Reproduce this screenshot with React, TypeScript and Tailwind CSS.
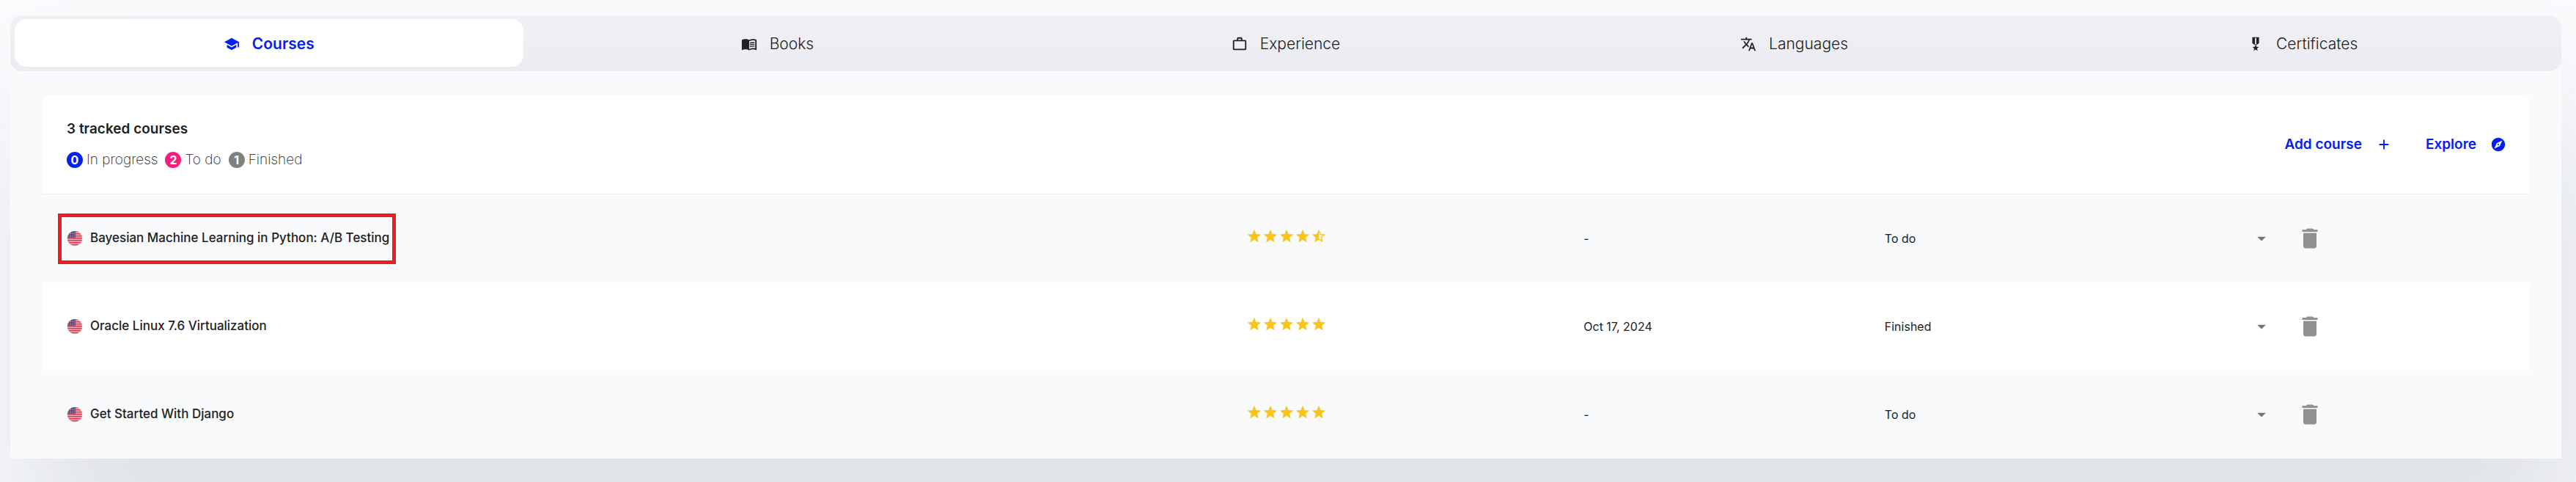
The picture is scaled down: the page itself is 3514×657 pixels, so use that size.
import { useId, useState } from "react";
import type { IconType } from "react-icons";
import {
  MdSchool,
  MdMenuBook,
  MdWorkOutline,
  MdTranslate,
  MdAdd,
  MdExplore,
  MdArrowDropDown,
  MdDelete,
  MdStar,
  MdStarHalf,
} from "react-icons/md";
import { clsx } from "clsx";

function MedalIcon({ className }: { className?: string }) {
  return (
    <svg viewBox="0 0 24 24" fill="currentColor" className={className} aria-hidden="true">
      <path d="M17 10.43V2H7v8.43c0 .35.18.68.49.86l4.18 2.51-.99 2.34-3.41.29 2.59 2.24L9.07 22 12 20.23 14.93 22l-.78-3.33 2.59-2.24-3.41-.29-.99-2.34 4.18-2.51c.3-.18.48-.5.48-.86zM13 12.23l-1 .6-1-.6V3h2v9.23z" />
    </svg>
  );
}

function FlagIcon() {
  const clip = useId();
  return (
    <svg viewBox="0 0 22 22" className="size-[22px] shrink-0" role="img" aria-label="English">
      <clipPath id={clip}>
        <circle cx="11" cy="11" r="10" />
      </clipPath>
      <circle cx="11" cy="11" r="10.5" fill="#d6d6da" />
      <g clipPath={`url(#${clip})`}>
        <rect width="22" height="22" fill="#efa3ad" />
        {[1, 4, 7, 10, 13, 16, 19].map((y) => (
          <rect key={y} y={y} width="22" height="1.4" fill="#dc3c55" />
        ))}
        <rect width="12" height="10.5" fill="#6a4a7c" />
        {[2, 4.5, 7, 9.2].map((y) =>
          [3, 5.5, 8, 10.4].map((x) => (
            <circle key={`${x}-${y}`} cx={x} cy={y} r="0.5" fill="#cfc3da" />
          )),
        )}
      </g>
    </svg>
  );
}

const tabs: { label: string; icon: IconType | typeof MedalIcon }[] = [
  { label: "Courses", icon: MdSchool },
  { label: "Books", icon: MdMenuBook },
  { label: "Experience", icon: MdWorkOutline },
  { label: "Languages", icon: MdTranslate },
  { label: "Certificates", icon: MedalIcon },
];

const counts = [
  { value: 0, label: "In progress", color: "bg-[#0220f0]" },
  { value: 2, label: "To do", color: "bg-[#fc1c80]" },
  { value: 1, label: "Finished", color: "bg-[#808080]" },
];

const courses = [
  { title: "Bayesian Machine Learning in Python: A/B Testing", rating: 4.5, date: "-", status: "To do", marked: true },
  { title: "Oracle Linux 7.6 Virtualization", rating: 5, date: "Oct 17, 2024", status: "Finished", marked: false },
  { title: "Get Started With Django", rating: 5, date: "-", status: "To do", marked: false },
];

function Rating({ value }: { value: number }) {
  return (
    <div className="-mt-[6px] flex text-[#f9c51c]" role="img" aria-label={`${value} out of 5`}>
      {[1, 2, 3, 4, 5].map((n) =>
        n <= value ? <MdStar key={n} className="size-[22px]" /> : <MdStarHalf key={n} className="size-[22px]" />,
      )}
    </div>
  );
}

export default function App() {
  const [active, setActive] = useState("Courses");
  return (
    <div className="min-h-screen overflow-hidden bg-[#fafbfd] pt-[21px] pr-5 pb-8 pl-[14px] font-['Inter',sans-serif] text-[#212121]">
      <main className="rounded-2xl shadow-[25px_140px_200px_0px_#dde0e6]">
        <div className="rounded-t-2xl bg-[#f9fafc]">
          <div
            role="tablist"
            className="grid h-[76px] grid-cols-5 rounded-2xl bg-linear-to-b from-[#f0f0f5] to-[#ebecf1] px-[6px] pt-[5px] pb-[6px]"
          >
            {tabs.map(({ label, icon: Icon }) => (
              <button
                key={label}
                type="button"
                role="tab"
                aria-selected={active === label}
                onClick={() => setActive(label)}
                className={clsx(
                  "flex items-center justify-center gap-[17px] rounded-2xl pt-[2px] text-[21px]",
                  active === label ? "bg-white font-semibold text-[#0220f0]" : "font-light",
                )}
              >
                <Icon className="size-[22px]" />
                {label}
              </button>
            ))}
          </div>
        </div>
        <section className="bg-[#f9fafc] pt-[33px] pr-[43px] pl-11">
          <header className="flex h-[135px] items-center justify-between rounded-t-xl border-b border-[#eceff5] bg-white pr-8 pl-[33px]">
            <div className="flex flex-col gap-[14px]">
              <h1 className="text-[19px] leading-7 font-semibold">3 tracked courses</h1>
              <ul className="flex items-center gap-[10px] text-[19px] leading-7 font-extralight">
                {counts.map(({ value, label, color }) => (
                  <li key={label} className="flex items-center gap-[5px]">
                    <span className={clsx("flex size-[22px] items-center justify-center rounded-full text-base font-bold text-white", color)}>
                      {value}
                    </span>
                    {label}
                  </li>
                ))}
              </ul>
            </div>
            <div className="flex gap-[46px] text-[19px] font-semibold text-[#0220f0]">
              <button type="button" className="flex items-center gap-[19px]">
                Add course
                <MdAdd className="size-[22px]" />
              </button>
              <button type="button" className="flex items-center gap-[19px]">
                Explore
                <MdExplore className="size-[22px]" />
              </button>
            </div>
          </header>
          <table className="w-full table-fixed text-left text-base">
            <colgroup>
              <col className="w-[48.2%]" />
              <col className="w-[13.7%]" />
              <col className="w-[12.1%]" />
              <col className="w-[14.8%]" />
              <col />
            </colgroup>
            <tbody>
              {courses.map((course) => (
                <tr key={course.title} className="h-[120px] even:bg-white">
                  <td className="p-0 pl-[21px]">
                    <div
                      className={clsx(
                        "flex h-[69px] w-fit items-center gap-[10px] border-[5px] pr-1 pl-[7px] text-[17px] font-medium",
                        course.marked ? "border-[#ed1c24]" : "border-transparent",
                      )}
                    >
                      <FlagIcon />
                      {course.title}
                    </div>
                  </td>
                  <td className="p-0 pl-[7px]">
                    <Rating value={course.rating} />
                  </td>
                  <td className="p-0 pl-[2px]">{course.date}</td>
                  <td className="p-0 pl-[2px]">{course.status}</td>
                  <td className="p-0">
                    <div className="flex items-center gap-[34px]">
                      <button type="button" aria-label="Change status" className="text-[#757575]">
                        <MdArrowDropDown className="size-7" />
                      </button>
                      <button type="button" aria-label="Delete course" className="text-[#909090]">
                        <MdDelete className="size-9" />
                      </button>
                    </div>
                  </td>
                </tr>
              ))}
            </tbody>
          </table>
        </section>
      </main>
    </div>
  );
}
